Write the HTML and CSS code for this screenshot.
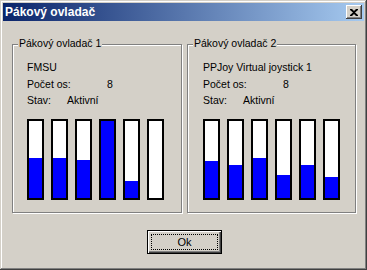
FILE: index.html
```html
<!doctype html>
<html lang="cs">
<head>
    <meta charset="UTF-8" />
    <meta name="viewport" content="width=device-width, initial-scale=1.0" />
    <link rel="stylesheet" href="styles.css">
</head>
<body>
    <div class="window">
        <div class="titlebar">
            <span class="title">Pákový ovladač</span>
            <div class="close-btn">
                <svg width="8" height="7" viewBox="0 0 8 7">
                    <path d="M0 0h2l2 2 2-2h2v1L5 3.5 8 6v1H6L4 5 2 7H0V6l3-2.5L0 1z" fill="#000" />
                </svg>
            </div>
        </div>

        <div class="content">
            <div class="groups">
                <div class="group">
                    <span class="legend">Pákový ovladač 1</span>
                    <div class="info">
                        <div class="row">FMSU</div>
                        <div class="row"><span class="label">Počet os:</span>8</div>
                        <div class="row"><span class="label-short">Stav:</span>Aktivní</div>
                    </div>
                    <div class="bars">
                        <div class="bar"><div class="fill" style="height: 51%;"></div></div>
                        <div class="bar"><div class="fill" style="height: 51%;"></div></div>
                        <div class="bar"><div class="fill" style="height: 49%;"></div></div>
                        <div class="bar"><div class="fill" style="height: 100%;"></div></div>
                        <div class="bar"><div class="fill" style="height: 21%;"></div></div>
                        <div class="bar"><div class="fill" style="height: 0%;"></div></div>
                    </div>
                </div>

                <div class="group group-second">
                    <span class="legend">Pákový ovladač 2</span>
                    <div class="info">
                        <div class="row">PPJoy Virtual joystick 1</div>
                        <div class="row"><span class="label">Počet os:</span>8</div>
                        <div class="row"><span class="label-short">Stav:</span>Aktivní</div>
                    </div>
                    <div class="bars">
                        <div class="bar"><div class="fill" style="height: 47%;"></div></div>
                        <div class="bar"><div class="fill" style="height: 42%;"></div></div>
                        <div class="bar"><div class="fill" style="height: 51%;"></div></div>
                        <div class="bar"><div class="fill" style="height: 29%;"></div></div>
                        <div class="bar"><div class="fill" style="height: 42%;"></div></div>
                        <div class="bar"><div class="fill" style="height: 26%;"></div></div>
                    </div>
                </div>
            </div>

            <div class="actions">
                <div class="ok-btn"><span class="focus">Ok</span></div>
            </div>
        </div>
    </div>
</body>
</html>
```

FILE: styles.css
```css
body {
    margin: 0;
    padding: 0;
    font-family: "Liberation Sans", Arial, sans-serif;
    font-size: 10.5px;
    color: #000;
    background: #d4d0c8;
}

.window {
    box-sizing: border-box;
    width: 367px;
    height: 270px;
    padding: 3px;
    background: #d4d0c8;
    box-shadow: inset -1px -1px 0 #404040, inset 1px 1px 0 #d4d0c8, inset -2px -2px 0 #808080, inset 2px 2px 0 #fff;
}

.titlebar {
    height: 18px;
    display: flex;
    align-items: center;
    justify-content: space-between;
    padding: 0 2px;
    background: linear-gradient(to right, #0a246a, #a6caf0);
}

.title {
    color: #fff;
    font-weight: 700;
    font-size: 12px;
}

.close-btn {
    box-sizing: border-box;
    width: 16px;
    height: 14px;
    display: flex;
    align-items: center;
    justify-content: center;
    background: #d4d0c8;
    box-shadow: inset -1px -1px 0 #404040, inset 1px 1px 0 #fff, inset -2px -2px 0 #808080;
}

.close-btn svg {
    display: block;
}

.content {
    padding-top: 23px;
}

.groups {
    display: flex;
    gap: 5px;
    padding-left: 9px;
}

.group {
    position: relative;
    box-sizing: border-box;
    width: 170px;
    height: 169px;
    padding: 14px 0 0 14px;
    border: 1px solid #808080;
    box-shadow: inset 1px 1px 0 #fff, 1px 1px 0 #fff;
}

.group-second {
    width: 169px;
    padding-left: 15px;
}

.legend {
    position: absolute;
    top: -8px;
    left: 5px;
    padding: 0 1px;
    line-height: 13px;
    background: #d4d0c8;
}

.info {
    line-height: 16.5px;
}

.label {
    display: inline-block;
    width: 80px;
}

.label-short {
    display: inline-block;
    width: 40px;
}

.bars {
    display: flex;
    gap: 7px;
    margin-top: 10px;
}

.bar {
    box-sizing: border-box;
    width: 17px;
    height: 81px;
    border: 2px solid #000;
    background: #fff;
    display: flex;
    flex-direction: column;
    justify-content: flex-end;
}

.fill {
    background: #0000ff;
}

.actions {
    display: flex;
    justify-content: center;
    padding-left: 2px;
    margin-top: 17px;
}

.ok-btn {
    box-sizing: border-box;
    width: 75px;
    height: 24px;
    padding: 3px;
    border: 1px solid #000;
    background: #d4d0c8;
    box-shadow: inset 1px 1px 0 #fff, inset -1px -1px 0 #404040, inset -2px -2px 0 #808080;
    display: flex;
}

.focus {
    flex: 1;
    display: flex;
    align-items: center;
    justify-content: center;
    border: 1px dotted #000;
    font-size: 11px;
}
```
